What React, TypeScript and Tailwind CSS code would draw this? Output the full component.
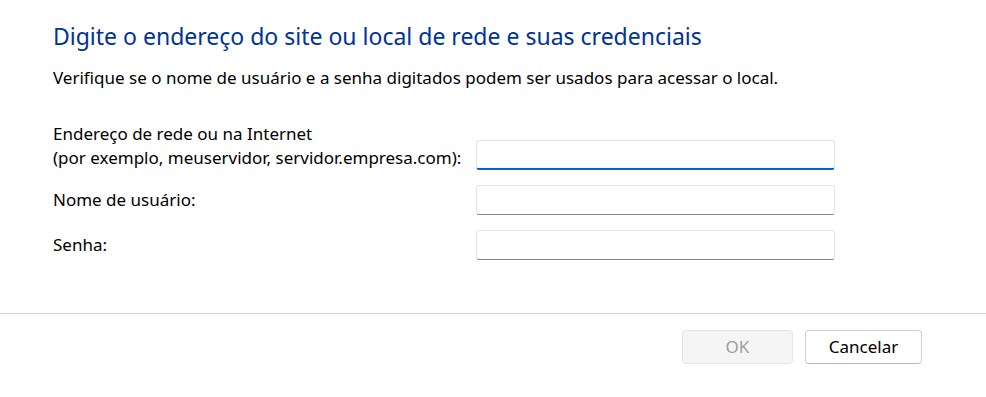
import { memo } from "react";

function Field({ focused }: { focused?: boolean }) {
  return (
    <div
      className={
        "h-[30px] w-[359px] rounded-[3px] border border-[#e5e5e5] bg-white " +
        (focused ? "border-b-2 border-b-[#0067c0]" : "border-b-[#868686]")
      }
    />
  );
}

function App() {
  return (
    <div
      className="h-[397px] w-[986px] bg-white text-[#000000]"
      style={{ fontFamily: '"Noto Sans", "Open Sans", sans-serif' }}
    >
      <div className="h-[313px] px-[53px] pt-[21px]">
        <h1 className="text-[23px] leading-[30px] text-[#003399]">
          Digite o endereço do site ou local de rede e suas credenciais
        </h1>
        <p className="mt-[15px] text-[17px] leading-[24px]">
          Verifique se o nome de usuário e a senha digitados podem ser usados para acessar o local.
        </p>

        <div className="mt-[32px] grid grid-cols-[423px_359px] items-end gap-y-[15px] text-[17px] leading-[24px]">
          <div>
            <div>Endereço de rede ou na Internet</div>
            <div>(por exemplo, meuservidor, servidor.empresa.com):</div>
          </div>
          <Field focused />

          <div className="self-center">Nome de usuário:</div>
          <Field />

          <div className="self-center">Senha:</div>
          <Field />
        </div>
      </div>

      <div className="flex justify-end gap-[12px] border-t border-[#d4d4d4] pr-[64px] pt-[16px]">
        <button className="h-[34px] w-[111px] rounded-[4px] border border-[#e5e5e5] bg-[#f5f5f5] text-[17px] text-[#9e9e9e]">
          OK
        </button>
        <button className="h-[34px] w-[117px] rounded-[4px] border border-[#d0d0d0] border-b-[#b8b8b8] bg-white text-[17px] text-black">
          Cancelar
        </button>
      </div>
    </div>
  );
}

export default memo(App);
